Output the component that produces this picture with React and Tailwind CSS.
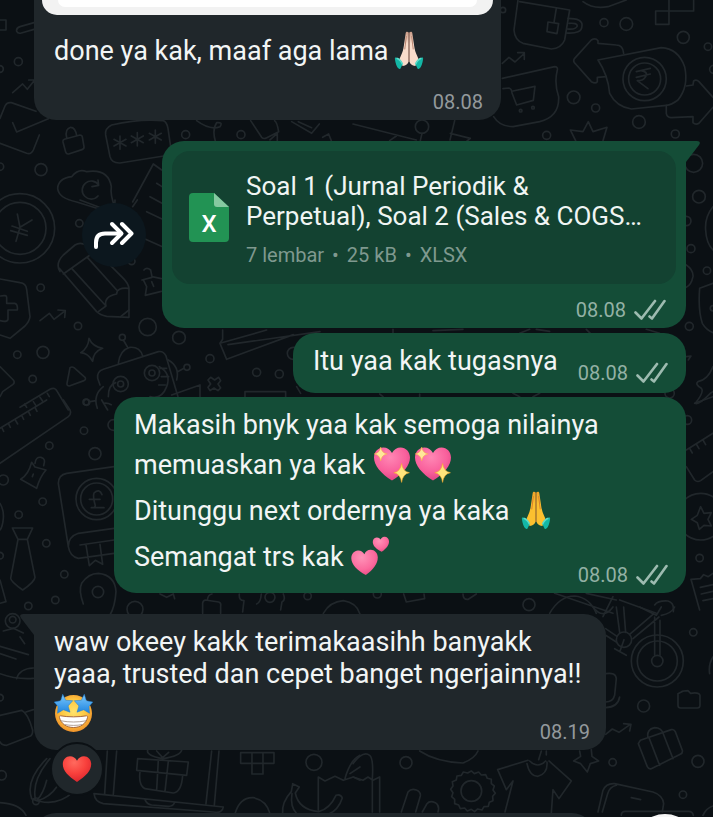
import { useId } from 'react';

// Each tile is drawn on a 1080x630 grid and placed at a third of its size
const doodleTiles = [
  {
    x: 0,
    y: 0,
    circles: [[55, 185, 12], [0, 207, 10], [0, 500, 11], [123, 509, 18], [557, 404, 12], [723, 404, 12]],
    paths: [
      'M0 60h18v30h-18M102 68L60 80q-12 4-10 14q4 8 14 5L102 88',
      'M38 278l30-26 14 16 22-28M86 240h18v16',
      'M0 355L15 318Q20 306 34 308L108 334M38 368L50 396L145 356M118 405L100 450Q94 464 80 460L0 430',
      'M193 418L240 405q6 0 7 6L252 440q1 7-6 9L206 462q-7 1-9-6L189 426q-1-6 4-8zM200 413q-6-26 12-31q14 0 18 25',
      'M510 465L360 489Q335 490 330 470L317 405Q314 385 335 375Q420 355 490 362Q500 365 504 385L512 440',
      'M360 408v40M342 418l36 20M342 438l36-20M412 398v40M394 408l36 20M394 428l36-20M466 390v40M448 400l36 20M448 420l36-20',
      'M345 622Q330 585 334 560Q325 505 260 515Q235 505 215 530Q175 535 173 565Q175 595 230 606L300 628',
      'M296 555A27 27 0 1 0 294 588M276 560l20-4-2-16',
      'M398 606L460 492L485 510M470 550l16 10M450 590l36 20',
      'M590 362q40 30 70 18q10-14-10-12q-14 20-4 55M752 362L785 412q6 6 14 2L836 395q-5-30-12-33M810 420l22-20v22',
      'M875 365L935 400L958 372M895 365l40 18M968 412l18-10 8 20',
    ],
  },
  {
    x: 353,
    y: 0,
    circles: [[753, 68, 12], [820, 72, 19], [991, 112, 18], [1065, 140, 11], [1082, 208, 12], [662, 292, 19], [728, 324, 12], [858, 366, 19], [967, 402, 12], [207, 380, 20], [450, 30, 8], [581, 406, 12], [1022, 490, 27], [1038, 590, 19], [875, 237, 65], [875, 237, 48], [503, 332, 4], [540, 323, 4]],
    paths: [
      'M495 0L483 90Q485 120 510 130L595 147Q625 145 635 120L650 30L500 5M610 25L603 68M585 66l32 5-5 30-30-6z',
      'M645 55q45 0 42 22q0 26-48 22M648 70q25-2 25 8q-5 12-30 9',
      'M948 0v73h-40v-40h114v-33M690 5Q720 28 765 20L820 0',
      'M448 190l20-18 18 14 28-26M494 158h20v20',
      'M812 160Q810 135 790 135L735 130V122Q728 112 715 120L665 175Q658 184 668 192L715 245Q728 252 733 245V232L760 230',
      'M735 180L925 143Q975 145 995 200Q1008 260 975 300Q955 315 940 316L835 327Q790 320 770 280Q765 225 735 180z',
      'M850 215l42-10M850 232l42-10M865 212q25 5 10 22q-5 8-22 8l32 24',
      'M1000 258L1020 255L1022 243q8-6 16 2L1080 292M940 316V340q2 12 14 13L1020 350V368q8 8 18 2L1080 322',
      'M448 235L605 200Q615 200 613 210Q603 250 617 290Q620 350 560 365L480 380Q440 380 422 350',
      'M450 266l18-2q8 2 9 15l14 36 50-14 5-42-66 14',
      'M668 422L652 390L690 395L706 365L720 395L762 382L750 422',
      'M0 372L190 420M110 422l20-14M305 362l-14 58M292 400l60 15-10 8M207 400l-5 22',
    ],
  },
  {
    x: 0,
    y: 200,
    circles: [[60, 85, 104], [60, 85, 78], [238, 70, 11], [122, 263, 11], [234, 378, 11], [443, 381, 26], [537, 413, 19], [395, 184, 10], [52, 464, 11], [129, 457, 18], [98, 537, 11], [630, 476, 12], [770, 517, 12], [838, 522, 12], [880, 460, 18], [367, 412, 9], [362, 552, 23], [362, 552, 9], [456, 519, 23], [456, 519, 9], [561, 502, 9], [260, 607, 9]],
    paths: [
      'M52 42l8 40 36-22M60 82l-12 42M32 92l50 14M36 78l46 16',
      'M180 215Q165 190 190 165L225 135Q240 125 258 135M178 205L290 335Q300 345 320 349L387 352V265Q385 250 370 235L300 165',
      'M190 222L270 165M215 205L318 318M262 172L350 270M318 318Q310 290 350 282Q350 262 385 265M295 335L318 318M362 350L387 330',
      'M0 237L60 248Q78 250 80 268L90 350Q88 365 75 378L30 415L0 405M2 288q18-4 18 4v18h24q10 2 8 20h-28v28q-4 10-24 4',
      'M120 362l28-22 14 18 34-26M174 330l22 2-2 20',
      'M432 210q8-10 20 0l4 20 28 6M426 240l30-8M430 240l10 20-4 26 48-12M455 245l6 14',
      'M267 415Q278 440 308 445Q280 455 278 484Q265 460 242 458Q265 445 267 415z',
      'M210 503q6-4 12 0L255 532q4 6-3 10L208 558q-8 0-7-8z',
      'M300 555L293 535Q290 515 310 508L475 455Q490 452 498 468L534 590M355 490Q360 450 390 442Q420 440 428 468M383 442L370 420',
      'M325 590q0-35 22-42M478 500Q515 520 500 560Q485 600 450 590M480 505h20M484 530h22M476 555h20M505 480Q540 500 530 540M533 515L552 505M270 605L288 602M310 560Q278 585 292 625',
      'M515 585l85-30v35M735 600v-25h122v25',
      'M632 532l12 8 12-8 6 10-8 10 8 12-8 8-12-8-12 8-6-10 8-10-8-12z',
      'M668 390v28l-8 12 20 48 200-74M660 430L800 390M684 434L960 395M890 560l12 20',
      'M60 622L150 568Q165 560 172 575L205 630M80 622l-6-10M100 605l8 12M120 592l8 12M142 580l6 10',
      'M0 500L40 540q6 8-2 14L8 575L0 590M240 0L320 30Q345 38 345 0M398 20L412 0M440 35l46 22M430 115l54 24',
    ],
  },
  {
    x: 353,
    y: 200,
    circles: [[1000, 63, 14], [1014, 146, 12], [1062, 212, 11], [1009, 379, 12], [950, 580, 14], [1080, 325, 8]],
    paths: [
      'M1080 20Q1055 50 1058 90Q1060 130 1080 150M1000 195Q1022 210 1020 230Q1015 255 1000 262',
      'M1080 250L1040 265Q1035 330 1048 370Q1060 390 1080 398M1000 470l14-2-8 12',
      'M1080 500Q1065 540 1035 545q-10 8 10 20q10 10-18 45q10 6 45-30L1080 575',
      'M120 388v12M240 392l90-4M500 400l30-12M550 388l40 6M700 388l12 12M880 388l40 12M80 582l10 8M200 582v8M480 580l20 10M540 590l20-10',
    ],
  },
  {
    x: 0,
    y: 400,
    circles: [[252, 92, 11], [148, 137, 11], [285, 161, 18], [10, 240, 15], [128, 305, 11], [56, 344, 11], [139, 430, 11], [0, 467, 10], [193, 523, 11], [85, 618, 11], [166, 600, 11], [258, 6, 9], [340, 75, 16], [290, 297, 62], [290, 297, 48], [294, 576, 17], [405, 628, 24], [810, 592, 15], [923, 588, 11]],
    paths: [
      'M0 85L140 0M0 190L205 50Q215 42 210 30L190 0M5 82l6 12M25 70l6 12M45 58l8 14M65 46l6 12M85 34l6 12M105 22l6 12',
      'M105 190q2-20 18-18q16 4 8 25M95 187l10 14L138 210Q120 230 110 265L62 238Q85 225 95 187zM100 222l-3 8M305 0l18 30M312 10q10-2 22 4',
      'M342 200L200 220Q175 225 175 250L205 440Q210 470 235 475L342 460M342 385L235 400Q205 410 205 440M240 435L342 420M258 435l10 62 18-16 22 12-8-60',
      'M306 284q-8-20-24-5q-4 10 4 38q0 6-12 6h38M268 298h32',
      'M37 384H98L82 418H54zM54 418L32 535Q32 545 68 570Q104 545 105 532L82 418',
      'M0 310Q12 330 10 355Q8 380 0 390M0 540L18 605L0 610',
      'M250 612Q235 570 245 550Q265 520 295 520Q345 525 348 575Q345 620 330 645',
      'M480 582l20 10 20-10 4 14M608 640v-30q0-8 8-10l40 6q8 2 6 12v22M622 600q2-16 14-18M718 582q-2 20 14 20l-4 34M770 612q12-4 14-30M850 582q8 18-4 24l-4 24M970 640q20-35 60-38q40 6 50 40',
    ],
  },
  {
    x: 353,
    y: 400,
    circles: [[1003, 60, 13], [1040, 474, 11], [528, 614, 18], [73, 582, 12], [1043, 350, 70]],
    paths: [
      'M1043 320l10 20 22-2-10 20 10 20-22-2-14 12-6-20-18-10 18-12z',
      'M1000 150L1080 100M1000 200L1025 240q8 8 18 2L1080 215M1010 145l8 14M1030 132l8 14M1050 120l8 14M1025 10l55-20',
      'M1080 520l-14 10-14-6-10 12-28 2L1040 630M1042 562l38-8M1045 582l35-8M1050 602l30-6',
      'M152 582l8 24 55-10-2-14M330 582q0 18 16 16l24-16M590 640Q620 588 665 588Q710 592 730 640M605 580L780 640M700 580L790 600M780 590l-30 60M800 600l110 40M905 615q10-14 40-12q20 6 16 32',
    ],
  },
  {
    x: 0,
    y: 607,
    circles: [[0, 272, 10], [5, 505, 14], [942, 466, 24], [38, 42, 22], [38, 38, 10], [108, 583, 10]],
    paths: [
      'M10 72l30-8 30 14M60 90l14 20M0 118l85 25M0 140l48 16M50 215q8-30 50-32M0 200q50 18 100 14',
      'M0 325L65 310Q85 320 98 370Q98 385 90 388L20 415Q5 415 0 405M78 315L100 308',
      'M140 455Q75 520 95 575Q165 605 220 555M150 455Q95 520 106 575M140 520Q130 560 112 578M170 540Q150 570 112 582',
      'M322 432L314 560M350 432L340 562M635 432L618 590M657 432L643 595M282 560L670 600Q668 620 640 615L310 590Q285 585 282 560zM435 578q5 14 20 16l50 4q14 0 18-10',
      'M413 455L565 465L560 505L410 490zM420 495q-5 40 15 50L520 558Q545 555 548 505M475 460l-5 90M505 463l-10 90M488 455q-50-10-45-25M490 455q50-8 55-25M470 432l18 20 18-16',
      'M722 437h100v32h-33v32h-33v-32h-34zM756 437v32h33v-32',
      'M955 610V510L975 522L1005 508L1030 520L1060 510L1080 520M1035 515Q1050 460 1080 445M1050 500l30-20',
      'M878 530l20 10-12 18q10 50 70 56Q990 605 1008 565q14-5 19 8Q1015 610 985 622M878 532l-4 22Q845 585 848 620M876 560Q870 600 890 620',
      'M705 620Q720 570 760 572Q800 580 810 620M0 587Q60 590 78 625',
    ],
  },
  {
    x: 353,
    y: 607,
    circles: [[913, 162, 78], [913, 162, 60], [913, 162, 17], [813, 98, 23], [1021, 76, 11], [872, 297, 18], [159, 467, 18], [779, 466, 11], [1035, 463, 18], [990, 563, 11], [355, 552, 31]],
    paths: [
      'M905 145V30M921 145V40M790 0L800 76M812 0L818 76M840 95L918 30M830 82L900 22M860 0L910 25L925 0M925 25q30-5 40-25M720 0q30 40 60 0M785 125l35 20M813 98l-12 35M758 65L792 88M758 85L790 105',
      'M985 255q5-4 20-4l8 8q25-4 28 6v30q0 8-8 8h-50q-8 0-8-8v-35z',
      'M862 400L955 368q8-2 12 6L988 430q2 8-6 12L895 485q-8 2-12-6L856 410zM885 392q-5-25 20-30q20 0 26 18M888 392L920 475M930 378L960 455',
      'M758 382l20-16 20 10 34-24M812 350l22 2-4 20M758 200q30-5 32 15l-5 50q-5 20-27 20M800 270q-5 30-42 32M1080 150q-14 20-10 50',
      'M680 432L683 448L662 462L683 470L703 495L712 470L737 462L717 448L715 428',
      'M355 492l9 8 13-5 8 9 13-1 5 11 12 3 0 13 9 7-4 12 7 10-8 9 1 13-11 5-3 12-13 1-6 10-13-3-9 8-10-7-12 5-8-9-13 2-5-11-12-4 0-13-9-8 4-12-7-10 7-10-2-13 12-5 2-12 13-2 6-10 13 3z',
      'M525 460L434 488L460 548L480 522L456 615M588 462L655 522L618 575L600 548L595 618M522 470Q530 508 555 508Q585 500 582 465M530 462q25 24 48 0M565 432l-8 26M580 432v12',
      'M0 470q30-40 50-25q12 10 8 70M0 510l30 10 15-10 15 10 20-10V615M58 520V615',
      'M145 615L165 555q10-12 25-6q14 6 12 18L188 615M208 615l14-25q8-10 25-3q14 8 8 28M200 432Q250 465 330 468Q365 455 375 432',
      'M735 615L750 550Q760 528 785 530L900 555Q930 565 932 590L928 615M748 615L764 560Q770 540 790 535M835 572l28 6M805 625q0-12 12-12h190q12 0 14 12M1050 625q10-22 30-28',
    ],
  },
];

const ChatWallpaper = () => (
  <svg
    aria-hidden="true"
    viewBox="0 0 713 817"
    preserveAspectRatio="xMidYMid slice"
    className="absolute inset-0 h-full w-full"
  >
    {doodleTiles.map((tile) => (
      <g
        key={`${tile.x}-${tile.y}`}
        transform={`translate(${tile.x} ${tile.y}) scale(0.3333)`}
        fill="none"
        stroke="#21272b"
        strokeWidth="5"
        strokeLinecap="round"
        strokeLinejoin="round"
      >
        {tile.circles.map(([cx, cy, r]) => (
          <circle key={`${cx}-${cy}-${r}`} cx={cx} cy={cy} r={r} />
        ))}
        {tile.paths.map((d) => (
          <path key={d} d={d} />
        ))}
      </g>
    ))}
  </svg>
);

const Emoji = ({ label, children }) => (
  <span className="inline-flex h-[46px] w-[41px] items-center align-[-10px]">
    <svg role="img" aria-label={label} viewBox="0 0 40 40" className="h-10 w-10">
      {children}
    </svg>
  </span>
);

const FoldedHands = ({ skin, edge, crease }) => {
  const id = useId();
  return (
    <Emoji label="folded hands">
      <defs>
        <linearGradient id={id} x1="0" y1="0" x2="0" y2="1">
          <stop offset="0" stopColor={edge} />
          <stop offset="0.35" stopColor={skin} />
          <stop offset="1" stopColor={skin} />
        </linearGradient>
      </defs>
      <path
        d="M19.6 2.4c-1-1-2.600-1-2.900.6l-1.800 12.400c-.5 4-1.500 7-2.900 10.200-.8 2-1.500 3.600-2.400 5.200l4.200 5.200c3.200-.5 5.100-2 5.800-4.500z"
        fill={`url(#${id})`}
      />
      <path
        d="M20.400 2.400c1-1 2.600-1 2.900.6l1.800 12.400c.5 4 1.500 7 2.900 10.200.8 2 1.500 3.600 2.400 5.200l-4.200 5.200c-3.200-.5-5.100-2-5.800-4.500z"
        fill={`url(#${id})`}
      />
      <path d="M20 3v28.500M17.300 6.500L15.800 19M22.700 6.500L24.200 19" stroke={crease} strokeWidth="1" fill="none" strokeLinecap="round" />
      <path d="M6.600 27.600c2.600 0 5.400 2.200 7.200 6.200l-2.300 4.600c-.5.700-1.300.7-1.900.2-1.800-1.700-3.100-5-3.700-9.700-.1-.8.200-1.300.7-1.300z" fill="#13b7a6" />
      <path d="M33.400 27.600c-2.600 0-5.400 2.200-7.200 6.200l2.300 4.600c.5.700 1.300.7 1.900.2 1.800-1.700 3.100-5 3.700-9.700.1-.8-.2-1.300-.7-1.300z" fill="#13b7a6" />
      <path d="M7.600 28.200c2.500.7 4.500 2.700 5.900 6M32.400 28.200c-2.500.7-4.500 2.700-5.900 6" stroke="#5fdccb" strokeWidth="1.500" fill="none" />
    </Emoji>
  );
};

const SparklingHeart = () => {
  const id = useId();
  return (
    <Emoji label="sparkling heart">
      <defs>
        <radialGradient id={id} cx="0.45" cy="0.3" r="0.8">
          <stop offset="0" stopColor="#ff87b4" />
          <stop offset="0.55" stopColor="#f9609c" />
          <stop offset="1" stopColor="#d93a7c" />
        </radialGradient>
      </defs>
      <path
        d="M20 36.500C9 29.500 2 21.500 2 13.400 2 7.600 6.300 3.400 11.300 3.400c3.700 0 7 2 8.700 5.600 1.700-3.600 5-5.600 8.700-5.600 5 0 9.300 4.200 9.300 10 0 8.100-7 16.100-18 23.100z"
        fill={`url(#${id})`}
      />
      <path d="M8.700 3q.8 6 6.500 6.900-5.700.9-6.500 7-.8-6.100-6.500-7Q7.900 9 8.700 3z" fill="#ffe89a" stroke="#f5b13d" strokeWidth="0.500" />
      <path d="M29.600 19.500q1.100 8 7.800 9.200-6.700 1.200-7.800 9.700-1.100-8.500-7.800-9.700 6.700-1.200 7.800-9.200z" fill="#ffe47c" stroke="#f5a92b" strokeWidth="0.600" />
    </Emoji>
  );
};

const TwoHearts = () => {
  const id = useId();
  return (
    <Emoji label="two hearts">
      <defs>
        <radialGradient id={id} cx="0.4" cy="0.3" r="0.8">
          <stop offset="0" stopColor="#ff93b8" />
          <stop offset="0.6" stopColor="#fb6a9d" />
          <stop offset="1" stopColor="#e8437f" />
        </radialGradient>
      </defs>
      <path
        d="M15.800 39C7 34.400 1.400 28.500 1.300 22.300c0-4.400 2.900-7.600 6.600-7.800 2.800-.2 5 1.200 6.500 3.700 1.100-2.700 3.300-4.300 6.100-4.400 4.100-.1 7.200 3.200 7.300 7.500.1 6.500-4.600 12.500-12 17.700z"
        fill={`url(#${id})`}
      />
      <path
        d="M31.600 15.800c-5-2.400-8.400-5.500-8.800-9.200-.3-2.700 1.300-4.900 3.700-5.100 1.700-.2 3.200.6 4.100 2.100.6-1.700 1.900-2.700 3.600-2.900 2.500-.3 4.500 1.600 4.800 4.200.3 4-2.600 7.600-7.400 10.900z"
        fill={`url(#${id})`}
      />
    </Emoji>
  );
};

const StarStruck = () => {
  const id = useId();
  return (
    <Emoji label="star-struck face">
      <defs>
        <radialGradient id={id} cx="0.5" cy="0.45" r="0.55">
          <stop offset="0" stopColor="#ffe36b" />
          <stop offset="0.6" stopColor="#fdc741" />
          <stop offset="1" stopColor="#f0922a" />
        </radialGradient>
        <linearGradient id={`${id}s`} x1="0" y1="0" x2="0" y2="1">
          <stop offset="0" stopColor="#7cc8fb" />
          <stop offset="1" stopColor="#1c83e0" />
        </linearGradient>
      </defs>
      <circle cx="19.500" cy="20.500" r="18.500" fill={`url(#${id})`} />
      <g fill={`url(#${id}s)`} stroke="#1b7cd2" strokeWidth="0.500" strokeLinejoin="round">
        <path d="M8.700 1.200l3 6.100 7 .4-4.600 5.200 1.900 6.300-6.700-2.400-5.800 3.500.5-6.800L.2 9.100l6.500-1.400z" />
        <path d="M30.300 1.200l-3 6.100-7 .4 4.600 5.200-1.900 6.300 6.700-2.400 5.800 3.500-.5-6.800 3.800-4.400-6.500-1.400z" />
      </g>
      <path d="M6.500 22.800c8 1.400 18 1.400 26 0 .9 0 1.300.6 1.100 1.500-1.500 6.400-7 10.200-14.100 10.200S6.900 30.700 5.400 24.300c-.2-.9.200-1.500 1.100-1.500z" fill="#fff" stroke="#a9683a" strokeWidth="1" />
      <path d="M7 27.800c8 1.600 17 1.600 25 0M10.500 31.500c6 1.200 12 1.200 18 0" stroke="#a08a7c" strokeWidth="0.800" fill="none" />
    </Emoji>
  );
};

const RedHeart = () => {
  const id = useId();
  return (
    <svg role="img" aria-label="red heart" viewBox="0 0 30 28" className="h-7 w-[30px]">
      <defs>
        <radialGradient id={id} cx="0.4" cy="0.25" r="0.85">
          <stop offset="0" stopColor="#ff6a5e" />
          <stop offset="0.5" stopColor="#f8403c" />
          <stop offset="1" stopColor="#d31f2a" />
        </radialGradient>
      </defs>
      <path
        d="M15 27C6.400 21.500.8 15.600.8 9.300.8 4.500 4 1.200 8 1.200c3 0 5.600 1.600 7 4.500 1.400-2.900 4-4.500 7-4.500 4 0 7.200 3.300 7.200 8.100C29.200 15.600 23.600 21.500 15 27z"
        fill={`url(#${id})`}
      />
    </svg>
  );
};

const ReadTicks = () => (
  <svg
    role="img"
    aria-label="delivered"
    viewBox="0 0 32 24"
    className="h-6 w-8"
    fill="none"
    stroke="#9dbbb0"
    strokeWidth="2.600"
    strokeLinecap="round"
    strokeLinejoin="round"
  >
    <path d="M1.500 14.500L7.500 20.500L21 3" />
    <path d="M15.500 18.500L18 20.500L30.500 3" />
  </svg>
);

const MessageMeta = ({ time, outgoing }) => (
  <div
    className={`flex items-center gap-2 self-end justify-self-end text-[20px] leading-6 ${
      outgoing ? 'text-[#93b1a5]' : 'text-[#93999c]'
    }`}
  >
    <time>{time}</time>
    {outgoing && <ReadTicks />}
  </div>
);

const FileCard = () => (
  <a href="#file" className="flex items-start gap-[17px] rounded-[18px] bg-[#134231] px-[17px] pt-5 pb-[17px]">
    <svg role="img" aria-label="Excel file" viewBox="0 0 40 49" className="mt-[22px] h-[49px] w-10 shrink-0">
      <path d="M4 0h21l15 14v31a4 4 0 0 1-4 4H4a4 4 0 0 1-4-4V4a4 4 0 0 1 4-4z" fill="#229354" />
      <path d="M25 0l15 14H28a3 3 0 0 1-3-3z" fill="#86c9a1" />
      <text x="20" y="39" textAnchor="middle" fill="#fff" className="font-[Roboto,sans-serif] text-[24px] font-medium">
        X
      </text>
    </svg>
    <div className="min-w-0">
      <h2 className="line-clamp-2 text-[26px] leading-[30px] text-[#f0f5f3]">
        Soal 1 (Jurnal Periodik &amp;<br />
        Perpetual), Soal 2 (Sales &amp; COGS…
      </h2>
      <p className="mt-3 flex gap-2 text-[20px] leading-6 text-[#7f998f]">
        <span>7 lembar</span>
        <span>•</span>
        <span>25 kB</span>
        <span>•</span>
        <span>XLSX</span>
      </p>
    </div>
  </a>
);

const App = () => {
  return (
    <main className="relative h-screen overflow-hidden bg-[#0b1014] font-[Roboto,sans-serif] text-[27px] leading-8 text-[#f2f5f5]">
      <ChatWallpaper />

      <div className="relative flex flex-col pr-[27px] pl-[34px]">
        {/* Photo with caption, scrolled partly out of view */}
        <article className="flex w-[467px] max-w-full flex-col rounded-b-[22px] bg-[#20272b] pb-[6px]">
          <div className="mx-2 h-[15px] rounded-b-[16px] bg-[#f2f2f2] px-4 pb-2">
            <div className="h-full rounded-b-lg bg-white" />
          </div>
          <div className="mt-3 flex flex-col pr-[18px] pl-5">
            <p>
              done ya kak, maaf aga lama
              <FoldedHands skin="#f8dccb" edge="#c99a86" crease="#b98672" />
            </p>
            <div className="mt-[17px] flex justify-end">
              <MessageMeta time="08.08" />
            </div>
          </div>
        </article>

        <div className="mt-[21px] flex items-center justify-end gap-4">
          <button
            type="button"
            aria-label="Forward"
            className="flex h-16 w-16 shrink-0 items-center justify-center rounded-full bg-[#0c171e]"
          >
            <svg viewBox="0 0 40 28" className="h-7 w-10" fill="none" stroke="#fff" strokeWidth="4" strokeLinecap="round" strokeLinejoin="round">
              <path d="M2 26v-4.500q0-9 9-9h14" />
              <path d="M18 3l9.500 9.500L18 22" />
              <path d="M28 3l9.500 9.500L28 22" />
            </svg>
          </button>
          <article className="relative flex w-[524px] flex-col rounded-[22px] rounded-tr-none bg-[#144d37] px-[10px] pt-[10px] pb-[6px]">
            <svg aria-hidden="true" viewBox="0 0 15 22" className="absolute top-0 -right-[14px] h-[22px] w-[15px]" fill="#144d37">
              <path d="M0 0h12q4.500 0 2 4L1 21H0z" />
            </svg>
            <FileCard />
            <div className="mt-[14px] flex justify-end pr-[10px]">
              <MessageMeta time="08.08" outgoing />
            </div>
          </article>
        </div>

        <article className="mt-[5px] flex min-h-[60px] items-end gap-5 self-end rounded-[22px] bg-[#144d37] pr-[18px] pb-2 pl-5">
          <p className="pb-2">Itu yaa kak tugasnya</p>
          <MessageMeta time="08.08" outgoing />
        </article>

        <article className="mt-1 grid w-full max-w-[572px] self-end rounded-[22px] bg-[#144d37] pt-3 pr-[18px] pb-[6px] pl-5">
          <p className="col-start-1 row-start-1 pb-2">
            Makasih bnyk yaa kak semoga nilainya memuaskan ya kak <SparklingHeart />
            <SparklingHeart />
            <br />
            Ditunggu next ordernya ya kaka <FoldedHands skin="#fcc02f" edge="#eea32a" crease="#d9822b" />
            <br />
            Semangat trs kak <TwoHearts />
          </p>
          <div className="col-start-1 row-start-1 grid">
            <MessageMeta time="08.08" outgoing />
          </div>
        </article>

        <div className="relative mt-[21px] w-full max-w-[572px]">
          <article className="relative grid rounded-[22px] rounded-tl-none bg-[#20272b] pt-3 pr-4 pb-[6px] pl-5">
            <svg aria-hidden="true" viewBox="0 0 15 22" className="absolute top-0 -left-[14px] h-[22px] w-[15px]" fill="#20272b">
              <path d="M15 0H3q-4.500 0-2 4l13 17h1z" />
            </svg>
            <p className="col-start-1 row-start-1 pb-2">
              waw okeey kakk terimakaasihh banyakk yaaa, trusted dan cepet banget ngerjainnya!! <StarStruck />
            </p>
            <div className="col-start-1 row-start-1 grid">
              <MessageMeta time="08.19" />
            </div>
          </article>
          <button
            type="button"
            aria-label="Reactions"
            className="absolute -bottom-[46px] left-4 flex h-[54px] w-[54px] items-center justify-center rounded-full border-2 border-[#0b1014] bg-[#20272b]"
          >
            <RedHeart />
          </button>
        </div>

        {/* Next message, just entering the view */}
        <div className="mt-[63px] flex items-start justify-between">
          <article className="h-16 w-[560px] rounded-[22px] bg-[#20272b]" />
        </div>
      </div>

      <button
        type="button"
        aria-label="Scroll to latest"
        className="absolute right-4 -bottom-[61px] h-16 w-16 rounded-full bg-[#f5f5f5]"
      />
    </main>
  );
};

export default App;
